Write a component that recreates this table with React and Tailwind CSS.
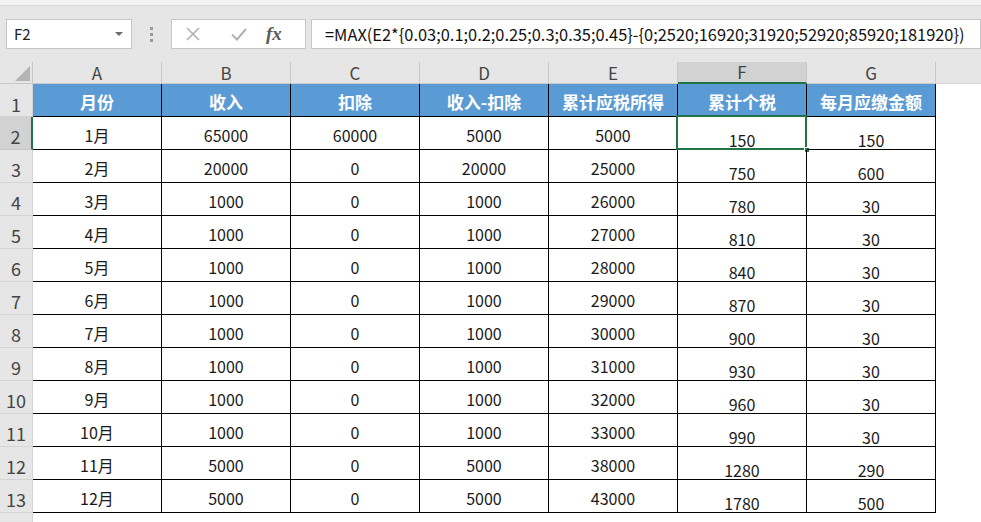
import React from 'react';

const cols = ['A', 'B', 'C', 'D', 'E', 'F', 'G'];
const heads = ['月份', '收入', '扣除', '收入-扣除', '累计应税所得', '累计个税', '每月应缴金额'];
const data = [
	['1月', '65000', '60000', '5000', '5000', '150', '150'],
	['2月', '20000', '0', '20000', '25000', '750', '600'],
	['3月', '1000', '0', '1000', '26000', '780', '30'],
	['4月', '1000', '0', '1000', '27000', '810', '30'],
	['5月', '1000', '0', '1000', '28000', '840', '30'],
	['6月', '1000', '0', '1000', '29000', '870', '30'],
	['7月', '1000', '0', '1000', '30000', '900', '30'],
	['8月', '1000', '0', '1000', '31000', '930', '30'],
	['9月', '1000', '0', '1000', '32000', '960', '30'],
	['10月', '1000', '0', '1000', '33000', '990', '30'],
	['11月', '5000', '0', '5000', '38000', '1280', '290'],
	['12月', '5000', '0', '5000', '43000', '1780', '500'],
];

const FormulaBar = () => (
	<div className="h-[56px] bg-[#e6e6e6] flex items-center">
		<div className="ml-[6px] w-[126px] h-[30px] bg-white border border-[#c6c6c6] flex items-center justify-between pl-[7px] pr-[8px]">
			<span className="text-[15px] text-[#222]">F2</span>
			<span className="w-0 h-0 border-l-[4px] border-r-[4px] border-t-[4px] border-l-transparent border-r-transparent border-t-[#6b6b6b]" />
		</div>
		<div className="w-[39px] flex flex-col items-center gap-[3px]">
			<span className="w-[3px] h-[3px] bg-[#9a9a9a]" />
			<span className="w-[3px] h-[3px] bg-[#9a9a9a]" />
			<span className="w-[3px] h-[3px] bg-[#9a9a9a]" />
		</div>
		<div className="w-[135px] h-[30px] bg-white border border-[#c6c6c6] flex items-center">
			<svg width="16" height="16" viewBox="0 0 16 16" className="ml-[13px]">
				<path d="M2 2 L14 14 M14 2 L2 14" stroke="#b0b0b0" strokeWidth="1.6" fill="none" />
			</svg>
			<svg width="18" height="16" viewBox="0 0 18 16" className="ml-[29px]">
				<path d="M2 8.5 L7 13.5 L16 3" stroke="#b0b0b0" strokeWidth="2" fill="none" />
			</svg>
			<span className="ml-[18px] text-[19px] italic font-bold text-[#5a5a5a] font-['Liberation_Serif',serif]">fx</span>
		</div>
		<div className="ml-[5px] flex-1 h-[30px] bg-white border border-[#c6c6c6] flex items-center pl-[13px]">
			<span className="text-[16.4px] text-[#111] whitespace-nowrap">
				=MAX(E2*{'{'}0.03;0.1;0.2;0.25;0.3;0.35;0.45{'}'}-{'{'}0;2520;16920;31920;52920;85920;181920{'}'})
			</span>
		</div>
	</div>
);

const App = () => {
	return (
		<div className="w-[981px] h-[522px] overflow-hidden bg-white font-['Noto_Sans_CJK_SC',sans-serif] flex flex-col">
			<div className="h-[6px] bg-[#f3f3f3] border-b border-[#d9d9d9]" />
			<FormulaBar />
			<div className="flex-1 grid grid-cols-[33px_repeat(7,129px)_1fr] grid-rows-[22px_repeat(13,33px)_1fr]">
				{/* corner */}
				<div className="bg-[#e6e6e6] border-r border-b border-[#c8c8c8] flex items-end justify-end p-[2px]">
					<span className="w-0 h-0 border-l-[15px] border-b-[15px] border-l-transparent border-b-[#b4b4b4]" />
				</div>
				{cols.map((c) => (
					<div
						key={c}
						className={
							c === 'F'
								? 'bg-[#d2d2d2] border-r border-[#c8c8c8] border-b-2 border-b-[#217346] flex items-center justify-center text-[17px] text-[#444]'
								: 'bg-[#e6e6e6] border-r border-b border-[#c8c8c8] flex items-center justify-center text-[17px] text-[#444]'
						}
					>
						{c}
					</div>
				))}
				<div className="bg-[#e6e6e6] border-b border-[#d4d4d4]" />

				{/* row 1 */}
				<div className="bg-[#e6e6e6] border-r border-b border-[#d4d4d4] flex items-end justify-center text-[18px] leading-[24px] text-[#444]">1</div>
				{heads.map((h) => (
					<div key={h} className="bg-[#5b9bd5] border-r border-b border-black flex items-center justify-center pt-[4px] text-[17px] font-bold text-white">
						{h}
					</div>
				))}
				<div />

				{data.map((r, i) => (
					<React.Fragment key={i}>
						<div
							className={
								i === 0
									? 'bg-[#d2d2d2] border-r-2 border-r-[#217346] border-b border-b-[#c8c8c8] flex items-end justify-center text-[18px] leading-[26px] text-[#444]'
									: 'bg-[#e6e6e6] border-r border-b border-[#d4d4d4] flex items-end justify-center text-[18px] leading-[26px] text-[#444]'
							}
						>
							{i + 2}
						</div>
						{r.map((v, j) => (
							<div
								key={j}
								className={
									j >= 5
										? 'relative border-r border-b border-black flex items-end justify-center text-[16px] leading-[18px] text-[#1a1a1a]'
										: 'border-r border-b border-black flex items-center justify-center pt-[4px] text-[16px] text-[#1a1a1a]'
								}
							>
								{v}
								{i === 0 && j === 5 && (
									<>
										<div className="absolute -left-[2px] -top-[2px] -right-[1px] -bottom-[1px] border-2 border-[#217346]" />
										<div className="absolute -right-[4px] -bottom-[4px] w-[6px] h-[6px] bg-[#217346] border border-white" />
									</>
								)}
							</div>
						))}
						<div />
					</React.Fragment>
				))}
				<div className="bg-[#e6e6e6] border-r border-[#d4d4d4]" />
			</div>
		</div>
	);
};

export default App;
